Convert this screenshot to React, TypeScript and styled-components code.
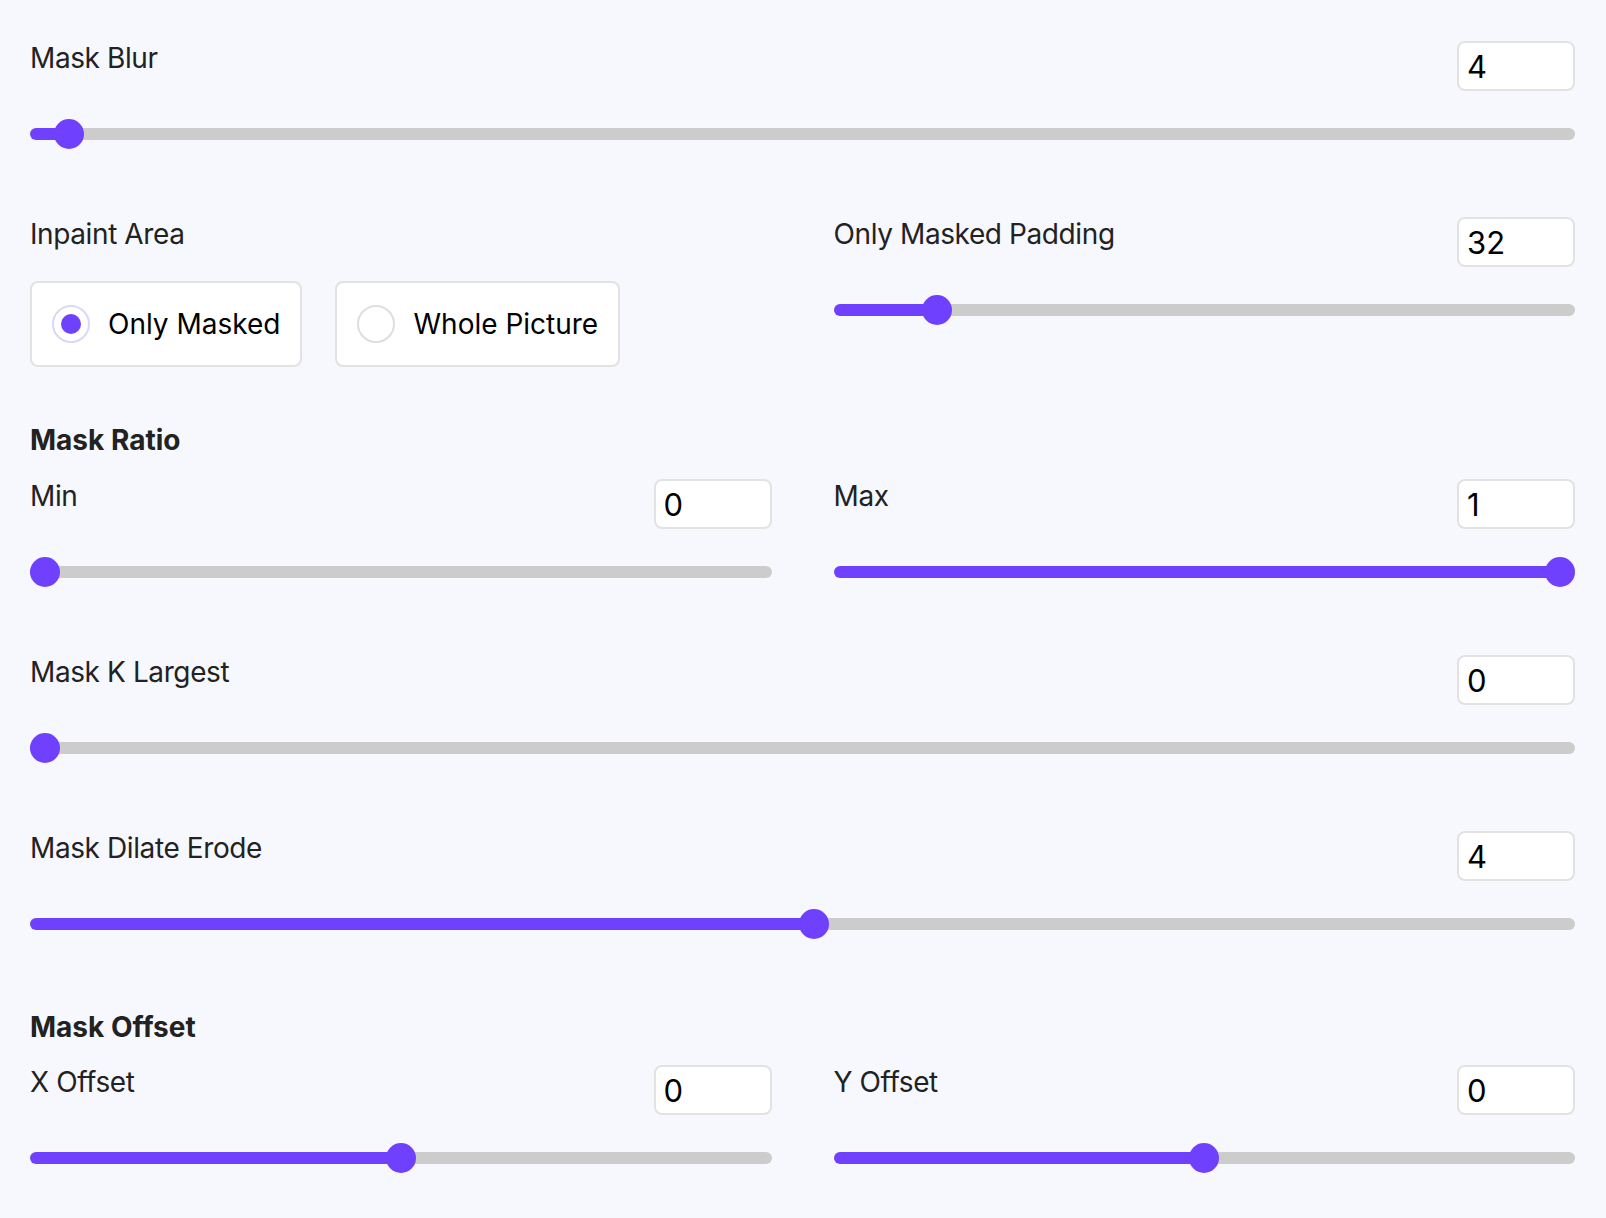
import React, { useState } from "react";
import styled, { createGlobalStyle } from "styled-components";

const PURPLE = "#7040ff";
const TRACK = "#cccccc";

const GlobalStyle = createGlobalStyle`
  html, body {
    margin: 0;
    padding: 0;
    background: #f7f8fd;
  }
  body {
    font-family: Inter, "Noto Sans", "Liberation Sans", sans-serif;
    color: #222222;
  }
  * { box-sizing: border-box; }
`;

const Page = styled.div`
  padding: 41px 31px 45px 30px;
  display: flex;
  flex-direction: column;
  min-height: 1218px;
`;

const Row = styled.div<{ $mt: number }>`
  display: grid;
  grid-template-columns: 1fr 1fr;
  column-gap: 62px;
  align-items: start;
  margin-top: ${(p) => p.$mt}px;
`;

const FieldWrap = styled.div<{ $mt?: number }>`
  display: flex;
  flex-direction: column;
  margin-top: ${(p) => p.$mt ?? 0}px;
`;

const Header = styled.div`
  display: flex;
  justify-content: space-between;
  align-items: flex-start;
  height: 50px;
`;

const Label = styled.label`
  font-size: 28px;
  line-height: 34px;
  font-weight: 400;
  letter-spacing: -0.4px;
  color: #222222;
`;

const SectionTitle = styled.div<{ $mt: number }>`
  font-size: 28px;
  line-height: 34px;
  font-weight: 700;
  color: #222222;
  margin-top: ${(p) => p.$mt}px;
`;

const NumberBox = styled.input`
  width: 118px;
  height: 50px;
  border: 2px solid #e2e2e2;
  border-radius: 8px;
  background: #ffffff;
  padding: 0 0 0 8px;
  font-family: Inter, "Liberation Sans", sans-serif;
  font-size: 31px;
  color: #000000;
  outline: none;
`;

const Range = styled.input<{ $pct: number }>`
  -webkit-appearance: none;
  appearance: none;
  display: block;
  width: 100%;
  height: 30px;
  margin: 28px 0 0 0;
  padding: 0;
  background: transparent;
  cursor: pointer;

  &::-webkit-slider-runnable-track {
    height: 12px;
    border-radius: 6px;
    background: linear-gradient(
      to right,
      ${PURPLE} calc(15px + ${(p) => p.$pct} * (100% - 30px)),
      ${TRACK} 0
    );
  }
  &::-webkit-slider-thumb {
    -webkit-appearance: none;
    appearance: none;
    width: 30px;
    height: 30px;
    border-radius: 50%;
    background: ${PURPLE};
    border: none;
    margin-top: -9px;
  }
  &:focus { outline: none; }
`;

const Column = styled.div`
  display: flex;
  flex-direction: column;
`;

const RadioGroup = styled.div`
  display: flex;
  gap: 33px;
  margin-top: 30px;
`;

const RadioCard = styled.label`
  display: flex;
  align-items: center;
  gap: 18px;
  height: 86px;
  padding: 0 20px;
  background: #ffffff;
  border: 2px solid #e2e2e2;
  border-radius: 8px;
  cursor: pointer;
`;

const RadioDot = styled.span<{ $checked: boolean }>`
  width: 38px;
  height: 38px;
  border-radius: 50%;
  border: 2px solid ${(p) => (p.$checked ? "#dcd7f6" : "#dedede")};
  background: #ffffff;
  display: flex;
  align-items: center;
  justify-content: center;
  flex-shrink: 0;

  &::after {
    content: "";
    width: 20px;
    height: 20px;
    border-radius: 50%;
    background: ${(p) => (p.$checked ? PURPLE : "transparent")};
  }
`;

const RadioText = styled.span`
  font-size: 28px;
  line-height: 34px;
  color: #000000;
`;

type FieldProps = {
  label: string;
  min: number;
  max: number;
  initial: number;
  mt?: number;
};

function SliderField({ label, min, max, initial, mt }: FieldProps) {
  const [value, setValue] = useState(initial);
  const pct = (value - min) / (max - min);
  return (
    <FieldWrap $mt={mt}>
      <Header>
        <Label>{label}</Label>
        <NumberBox
          type="text"
          value={String(value)}
          onChange={(e) => {
            const n = Number(e.target.value);
            if (!Number.isNaN(n)) setValue(Math.max(min, Math.min(max, n)));
          }}
        />
      </Header>
      <Range
        type="range"
        min={min}
        max={max}
        step={max - min <= 1 ? 0.01 : 1}
        value={value}
        $pct={pct}
        onChange={(e) => setValue(Number(e.target.value))}
      />
    </FieldWrap>
  );
}

function InpaintArea() {
  const [area, setArea] = useState<"masked" | "whole">("masked");
  return (
    <Column>
      <Label>Inpaint Area</Label>
      <RadioGroup>
        <RadioCard onClick={() => setArea("masked")}>
          <RadioDot $checked={area === "masked"} />
          <RadioText>Only Masked</RadioText>
        </RadioCard>
        <RadioCard onClick={() => setArea("whole")}>
          <RadioDot $checked={area === "whole"} />
          <RadioText>Whole Picture</RadioText>
        </RadioCard>
      </RadioGroup>
    </Column>
  );
}

export default function App() {
  return (
    <>
      <GlobalStyle />
      <Page>
        <SliderField label="Mask Blur" min={0} max={256} initial={4} />
        <Row $mt={68}>
          <InpaintArea />
          <SliderField label="Only Masked Padding" min={0} max={256} initial={32} />
        </Row>
        <SectionTitle $mt={56}>Mask Ratio</SectionTitle>
        <Row $mt={22}>
          <SliderField label="Min" min={0} max={1} initial={0} />
          <SliderField label="Max" min={0} max={1} initial={1} />
        </Row>
        <SliderField label="Mask K Largest" min={0} max={10} initial={0} mt={68} />
        <SliderField label="Mask Dilate Erode" min={-256} max={256} initial={4} mt={68} />
        <SectionTitle $mt={71}>Mask Offset</SectionTitle>
        <Row $mt={21}>
          <SliderField label="X Offset" min={-256} max={256} initial={0} />
          <SliderField label="Y Offset" min={-256} max={256} initial={0} />
        </Row>
      </Page>
    </>
  );
}
